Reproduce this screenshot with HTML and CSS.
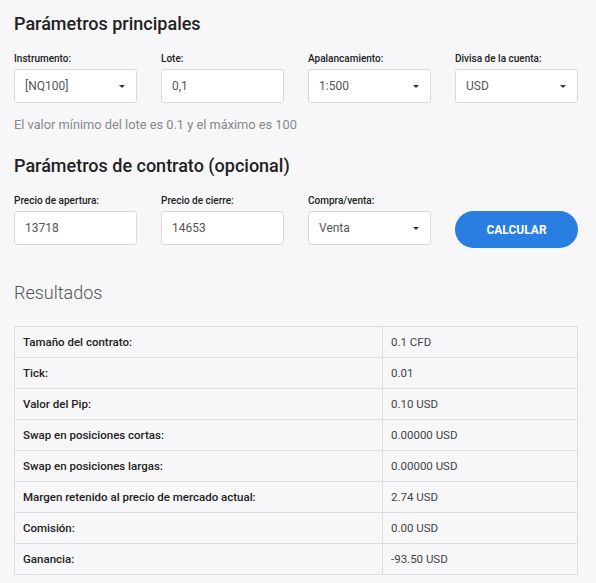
FILE: index.html
```html
<!DOCTYPE html>
<html lang="es">
<head>
    <meta charset="UTF-8">
    <meta name="viewport" content="width=device-width, initial-scale=1.0">
    <title>Calculadora de trading</title>
    <link rel="stylesheet" href="styles.css">
</head>
<body>
    <div class="calc">
        <h2 class="section-title">Parámetros principales</h2>
        <div class="fields">
            <div class="field">
                <label>Instrumento:</label>
                <div class="select">[NQ100]<span class="caret"></span></div>
            </div>
            <div class="field">
                <label>Lote:</label>
                <div class="input">0,1</div>
            </div>
            <div class="field">
                <label>Apalancamiento:</label>
                <div class="select">1:500<span class="caret"></span></div>
            </div>
            <div class="field">
                <label>Divisa de la cuenta:</label>
                <div class="select">USD<span class="caret"></span></div>
            </div>
        </div>
        <p class="hint">El valor mínimo del lote es 0.1 y el máximo es 100</p>

        <h2 class="section-title">Parámetros de contrato (opcional)</h2>
        <div class="fields">
            <div class="field">
                <label>Precio de apertura:</label>
                <div class="input">13718</div>
            </div>
            <div class="field">
                <label>Precio de cierre:</label>
                <div class="input">14653</div>
            </div>
            <div class="field">
                <label>Compra/venta:</label>
                <div class="select">Venta<span class="caret"></span></div>
            </div>
            <div class="field field-btn">
                <button class="btn">CALCULAR</button>
            </div>
        </div>

        <h2 class="results-title">Resultados</h2>
        <table class="results">
            <tr><td>Tamaño del contrato:</td><td>0.1 CFD</td></tr>
            <tr><td>Tick:</td><td>0.01</td></tr>
            <tr><td>Valor del Pip:</td><td>0.10 USD</td></tr>
            <tr><td>Swap en posiciones cortas:</td><td>0.00000 USD</td></tr>
            <tr><td>Swap en posiciones largas:</td><td>0.00000 USD</td></tr>
            <tr><td>Margen retenido al precio de mercado actual:</td><td>2.74 USD</td></tr>
            <tr><td>Comisión:</td><td>0.00 USD</td></tr>
            <tr><td>Ganancia:</td><td>-93.50 USD</td></tr>
        </table>
    </div>
</body>
</html>
```

FILE: styles.css
```css
body {
    margin: 0;
    background-color: #f7f7f9;
    font-family: Roboto, "Liberation Sans", Arial, sans-serif;
    color: #222;
}

.calc {
    width: 564px;
    padding: 13px 18px 0 14px;
}

.section-title {
    margin: 0;
    font-size: 18px;
    font-weight: 500;
    line-height: 21px;
    color: #222;
}

.fields {
    display: grid;
    grid-template-columns: repeat(4, 123px);
    column-gap: 24px;
    margin-top: 19px;
}

.field label {
    display: block;
    font-size: 10px;
    font-weight: 500;
    line-height: 12px;
    color: #222;
    margin-bottom: 4px;
}

.input,
.select {
    position: relative;
    box-sizing: border-box;
    height: 34px;
    line-height: 32px;
    padding: 0 10px;
    background: #fff;
    border: 1px solid #d9d9dc;
    border-radius: 3px;
    font-size: 12px;
    color: #555;
}

.caret {
    position: absolute;
    right: 11px;
    top: 15px;
    width: 0;
    height: 0;
    border-left: 3.5px solid transparent;
    border-right: 3.5px solid transparent;
    border-top: 3.5px solid #333;
}

.field-btn {
    display: flex;
    align-items: flex-end;
}

.btn {
    width: 123px;
    height: 37px;
    margin-bottom: -3px;
    border: none;
    border-radius: 19px;
    background-color: #2a7de1;
    color: #fff;
    font-family: inherit;
    font-size: 12px;
    font-weight: 700;
    cursor: pointer;
}

.hint {
    margin: 14px 0 22px;
    font-size: 12.8px;
    line-height: 16px;
    color: #88888c;
}

.results-title {
    margin: 37px 0 22px;
    font-size: 18px;
    font-weight: 300;
    line-height: 22px;
    color: #555;
}

.results {
    width: 564px;
    border-collapse: collapse;
    font-size: 11.5px;
}

.results td {
    height: 30px;
    padding: 0 8px;
    border: 1px solid #dedee2;
    color: #444;
}

.results td:first-child {
    width: 351px;
    font-weight: 500;
    color: #222;
}
```
